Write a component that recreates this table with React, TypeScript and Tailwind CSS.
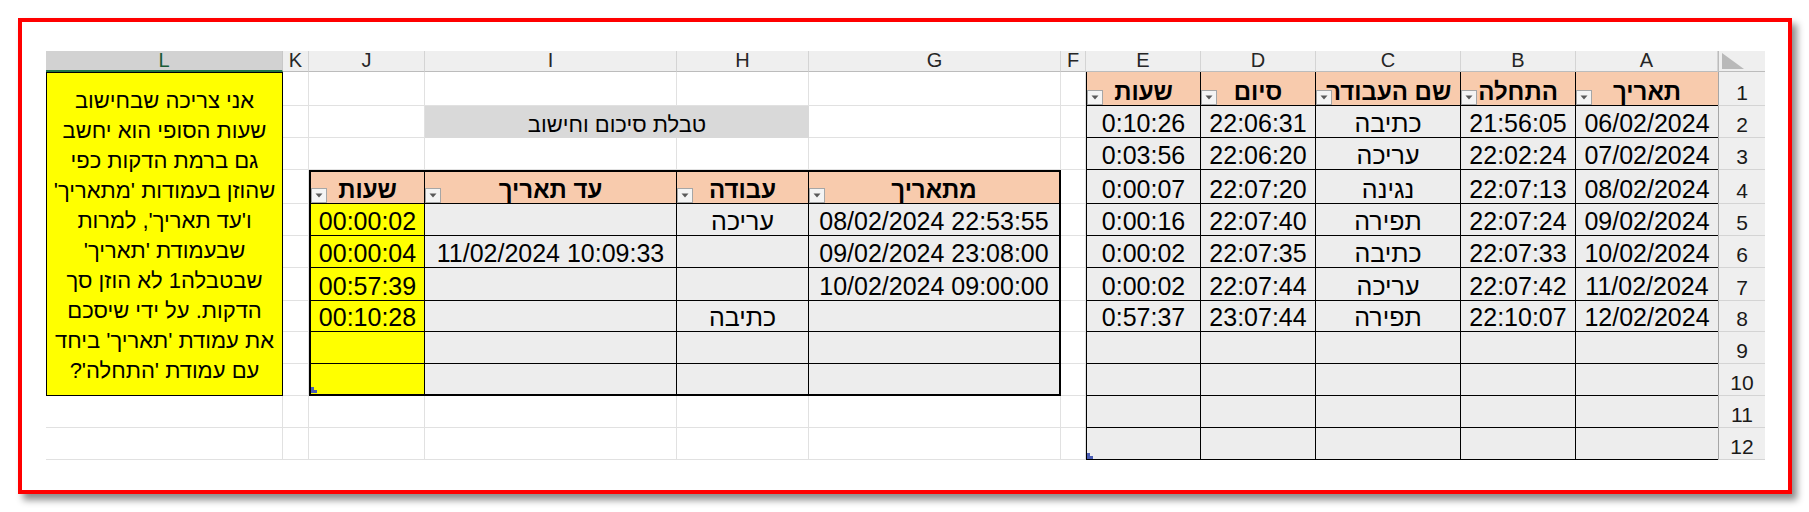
import React from "react";

const LETTERS = ["L", "K", "J", "I", "H", "G", "F", "E", "D", "C", "B", "A"];

// which sheet cells (grid row, grid col) sit under a table / textbox / title
const covered = (r: number, c: number) =>
  (c === 1 && r >= 2 && r <= 11) ||
  (r === 3 && c >= 4 && c <= 5) ||
  (c >= 3 && c <= 6 && r >= 5 && r <= 11) ||
  (c >= 8 && c <= 12 && r >= 2);

const NOTE = [
  "אני צריכה שבחישוב",
  "שעות הסופי הוא יחשב",
  "גם ברמת הדקות כפי",
  "שהוזן בעמודות 'מתאריך'",
  "ו'עד תאריך', למרות",
  "שבעמודת 'תאריך'",
  "שבטבלה1 לא הוזן סך",
  "הדקות. על ידי שיסכם",
  "את עמודת 'תאריך' ביחד",
  "עם עמודת 'התחלה'?",
];

const T1_HEAD = ["שעות", "סיום", "שם העבודה", "התחלה", "תאריך"];
const T1_ROWS = [
  ["0:10:26", "22:06:31", "כתיבה", "21:56:05", "06/02/2024"],
  ["0:03:56", "22:06:20", "עריכה", "22:02:24", "07/02/2024"],
  ["0:00:07", "22:07:20", "נגינה", "22:07:13", "08/02/2024"],
  ["0:00:16", "22:07:40", "תפירה", "22:07:24", "09/02/2024"],
  ["0:00:02", "22:07:35", "כתיבה", "22:07:33", "10/02/2024"],
  ["0:00:02", "22:07:44", "עריכה", "22:07:42", "11/02/2024"],
  ["0:57:37", "23:07:44", "תפירה", "22:10:07", "12/02/2024"],
  ["", "", "", "", ""],
  ["", "", "", "", ""],
  ["", "", "", "", ""],
  ["", "", "", "", ""],
];

const T2_HEAD = ["שעות", "עד תאריך", "עבודה", "מתאריך"];
const T2_ROWS = [
  ["00:00:02", "", "עריכה", "08/02/2024 22:53:55"],
  ["00:00:04", "11/02/2024 10:09:33", "", "09/02/2024 23:08:00"],
  ["00:57:39", "", "", "10/02/2024 09:00:00"],
  ["00:10:28", "", "כתיבה", ""],
  ["", "", "", ""],
  ["", "", "", ""],
];

function FilterButton() {
  return (
    <span className="absolute left-0 bottom-0 z-10 flex h-[15px] w-[16px] items-center justify-center border border-[#a6a6a6] bg-[#f4f4f4]">
      <svg width="8" height="5" viewBox="0 0 8 5">
        <path d="M0.5 0.5h7L4 4.5z" fill="#5a5a5a" />
      </svg>
    </span>
  );
}

function Handle() {
  return (
    <svg className="absolute left-0 bottom-[1px] z-10" width="6" height="6" viewBox="0 0 6 6">
      <path d="M0 0h3v3h3v3H0z" fill="#4a5db5" />
    </svg>
  );
}

function Table1() {
  return (
    <div className="relative col-start-8 col-span-5 row-start-2 row-span-12 grid grid-cols-[114px_115px_145px_115px_142px] grid-rows-[34px_32px_32px_34px_32px_32px_33px_31px_32px_32px_32px_32px] border-l border-black">
      {T1_HEAD.map((h, i) => (
        <div
          key={h}
          dir="rtl"
          className={
            "relative flex items-end justify-center overflow-hidden whitespace-nowrap border-b border-black bg-[#f8cbad] pb-px text-[24px] font-bold leading-[24px] " +
            (i < 4 ? "border-r" : "")
          }
        >
          {h}
          <FilterButton />
        </div>
      ))}
      {T1_ROWS.map((row, ri) =>
        row.map((v, i) => (
          <div
            key={ri + "-" + i}
            className={
              "flex items-end justify-center whitespace-nowrap border-b border-black bg-[#ededed] pb-px text-[25px] leading-[25px] " +
              (i < 4 ? "border-r" : "")
            }
          >
            {v}
          </div>
        ))
      )}
      <Handle />
    </div>
  );
}

function Table2() {
  return (
    <div className="relative col-start-3 col-span-4 row-start-5 row-span-7 grid grid-cols-[114px_252px_132px_250px] grid-rows-[32px_32px_32px_33px_31px_32px_30px] border-2 border-black">
      {T2_HEAD.map((h, i) => (
        <div
          key={h}
          dir="rtl"
          className={
            "relative flex items-end justify-center whitespace-nowrap border-b border-black bg-[#f8cbad] pb-px text-[24px] font-bold leading-[24px] " +
            (i < 3 ? "border-r" : "")
          }
        >
          {h}
          <FilterButton />
        </div>
      ))}
      {T2_ROWS.map((row, ri) =>
        row.map((v, i) => (
          <div
            key={ri + "-" + i}
            className={
              "flex items-end justify-center whitespace-nowrap border-black pb-px text-[25px] leading-[25px] " +
              (i === 0 ? "bg-[#ffff00] " : "bg-[#ededed] ") +
              (i < 3 ? "border-r " : "") +
              (ri < 5 ? "border-b" : "")
            }
          >
            {v}
          </div>
        ))
      )}
      <Handle />
    </div>
  );
}

export default function App() {
  const body: React.ReactNode[] = [];
  for (let r = 2; r <= 13; r++) {
    for (let c = 1; c <= 12; c++) {
      if (covered(r, c)) continue;
      body.push(<div key={r + ":" + c} className="border-r border-b border-[#e1e1e1] bg-white" />);
    }
    body.push(
      <div
        key={"n" + r}
        className="flex items-end justify-center border-l border-b border-l-[#a6a6a6] border-b-[#d4d4d4] bg-[#efefef] pb-[2px] text-[21px] leading-[21px] text-[#1a1a1a]"
      >
        {r - 1}
      </div>
    );
  }

  return (
    <div className="h-[512px] w-[1809px] overflow-hidden bg-white pl-[18px] pt-[18px] font-['Liberation_Sans',Arial,sans-serif] text-black">
      <div className="h-[476px] w-[1774px] border-4 border-[#ff0000] bg-white pl-[24px] pt-[29px] shadow-[5px_6px_7px_rgba(0,0,0,0.45)]">
        <div className="grid grid-cols-[237px_26px_116px_252px_132px_252px_25px_115px_115px_145px_115px_142px_47px] grid-rows-[21px_34px_32px_32px_34px_32px_32px_33px_31px_32px_32px_32px_32px]">
          {/* column headers */}
          {LETTERS.map((l) =>
            l === "L" ? (
              <div
                key={l}
                className="flex items-end justify-center border-r border-b-2 border-r-[#c8c8c8] border-b-[#217346] bg-[#d2d2d2] text-[20px] leading-[20px] text-[#185c37]"
              >
                {l}
              </div>
            ) : (
              <div
                key={l}
                className="flex items-end justify-center border-r border-b border-r-[#d4d4d4] border-b-[#bcbcbc] bg-[#efefef] pb-px text-[20px] leading-[20px] text-[#262626]"
              >
                {l}
              </div>
            )
          )}
          <div className="relative border-b border-l border-[#bcbcbc] bg-[#efefef]">
            <svg className="absolute left-[3px] top-[2px]" width="22" height="16" viewBox="0 0 22 16">
              <path d="M0 0v16h22z" fill="#b9b9b9" />
            </svg>
          </div>

          {body}

          {/* note box */}
          <div
            dir="rtl"
            className="col-start-1 row-start-2 row-span-10 flex flex-col items-center justify-center border border-black bg-[#ffff00] pt-[4px] text-[22px] leading-[30px]"
          >
            {NOTE.map((line) => (
              <div key={line} className="whitespace-nowrap">
                {line}
              </div>
            ))}
          </div>

          {/* summary title */}
          <div
            dir="rtl"
            className="col-start-4 col-span-2 row-start-3 flex items-end justify-center bg-[#d9d9d9] pb-[2px] text-[22px] leading-[22px]"
          >
            טבלת סיכום וחישוב
          </div>

          <Table2 />
          <Table1 />
        </div>
      </div>
    </div>
  );
}
